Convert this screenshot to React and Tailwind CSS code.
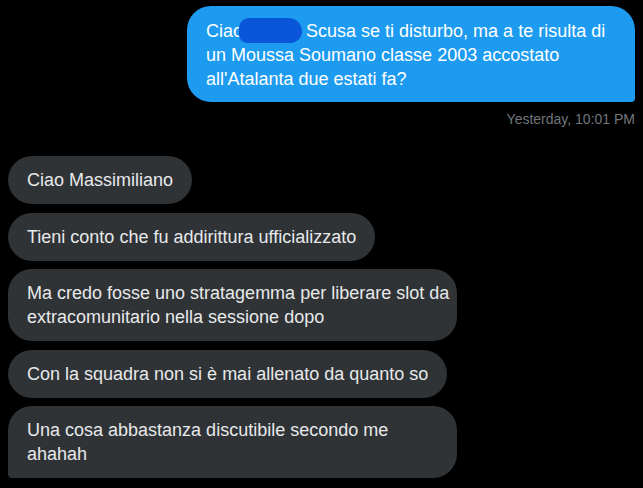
import React from "react";

const incoming = [
  { text: ["Ciao Massimiliano"] },
  { text: ["Tieni conto che fu addirittura ufficializzato"] },
  { text: ["Ma credo fosse uno stratagemma per liberare slot da", "extracomunitario nella sessione dopo"] },
  { text: ["Con la squadra non si è mai allenato da quanto so"] },
  { text: ["Una cosa abbastanza discutibile secondo me", "ahahah"], last: true },
];

const App = () => {
  return (
    <div
      className="w-[643px] h-[488px] overflow-hidden bg-black text-[18px]"
      style={{ fontFamily: '"Liberation Sans", Arial, sans-serif' }}
    >
      {/* sent message */}
      <div className="flex flex-col items-end pt-[6px] pr-[8px]">
        <div className="w-[448px] bg-[#1d9bf0] text-white rounded-[24px] rounded-br-[4px] pl-[19px] pr-4 pt-3 pb-[11px] leading-6 whitespace-nowrap">
          <div>
            Ciao
            {/* scribble over the name */}
            <span className="inline-block align-[-6px] w-[63px] h-[25px] ml-[-4px] mr-[4px] bg-[#0a55d8] rounded-[12px_16px_14px_10px]" />
            Scusa se ti disturbo, ma a te risulta di
          </div>
          <div>un Moussa Soumano classe 2003 accostato</div>
          <div>all'Atalanta due estati fa?</div>
        </div>
        <div className="mt-[9px] text-[14px] text-[#71767b] leading-4">Yesterday, 10:01 PM</div>
      </div>

      {/* received messages */}
      <div className="flex flex-col items-start gap-[8.5px] pl-[8px] pt-[29px]">
        {incoming.map((m, i) => (
          <div
            key={i}
            className={`bg-[#2f3336] text-[#e7e9ea] px-[19px] py-3 leading-6 whitespace-nowrap ${
              m.text.length > 1 ? "w-[449px] rounded-[24px]" : "rounded-[24px]"
            } ${m.last ? "rounded-bl-[4px]" : ""}`}
          >
            {m.text.map((line, j) => (
              <div key={j}>{line}</div>
            ))}
          </div>
        ))}
      </div>
    </div>
  );
};

export default App;
